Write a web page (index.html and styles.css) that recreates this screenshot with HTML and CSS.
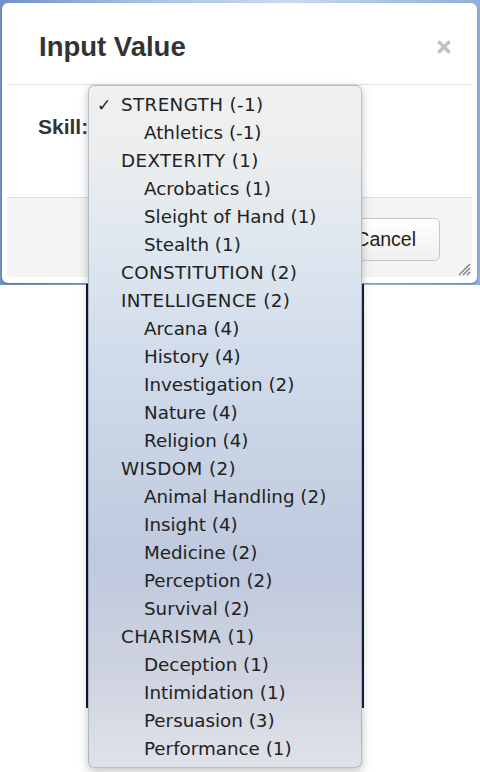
FILE: index.html
```html
<!DOCTYPE html>
<html>
<head>
<meta charset="utf-8">
<link rel="stylesheet" href="styles.css">
</head>
<body>
<div class="screen">
  <div class="dialog">
    <div class="dlg-header">
      <h1 class="dlg-title">Input Value</h1>
      <span class="dlg-close">
        <svg width="14" height="14" viewBox="0 0 14 14"><path d="M2.5 2.5 L11.5 11.5 M11.5 2.5 L2.5 11.5" stroke="#c2c2c2" stroke-width="3.6" stroke-linecap="round" fill="none"/></svg>
      </span>
    </div>
    <div class="dlg-body">
      <label class="skill-label">Skill:</label>
    </div>
    <div class="dlg-footer">
      <button class="btn">Cancel</button>
      <span class="grip">
        <svg width="14" height="14" viewBox="0 0 14 14"><path d="M13 2 L2 13 M13 6 L6 13 M13 10 L10 13" stroke="#777" stroke-width="1.2" fill="none"/></svg>
      </span>
    </div>
  </div>
</div>
<div class="backdrop"></div>
<ul class="menu">
  <li class="group checked"><span class="check">&#x2713;</span>STRENGTH (-1)</li>
  <li class="item">Athletics (-1)</li>
  <li class="group">DEXTERITY (1)</li>
  <li class="item">Acrobatics (1)</li>
  <li class="item">Sleight of Hand (1)</li>
  <li class="item">Stealth (1)</li>
  <li class="group">CONSTITUTION (2)</li>
  <li class="group">INTELLIGENCE (2)</li>
  <li class="item">Arcana (4)</li>
  <li class="item">History (4)</li>
  <li class="item">Investigation (2)</li>
  <li class="item">Nature (4)</li>
  <li class="item">Religion (4)</li>
  <li class="group">WISDOM (2)</li>
  <li class="item">Animal Handling (2)</li>
  <li class="item">Insight (4)</li>
  <li class="item">Medicine (2)</li>
  <li class="item">Perception (2)</li>
  <li class="item">Survival (2)</li>
  <li class="group">CHARISMA (1)</li>
  <li class="item">Deception (1)</li>
  <li class="item">Intimidation (1)</li>
  <li class="item">Persuasion (3)</li>
  <li class="item">Performance (1)</li>
</ul>
</body>
</html>
```
FILE: styles.css
```css
html, body {
  margin: 0;
  padding: 0;
  background: #ffffff;
  font-family: "Liberation Sans", Arial, sans-serif;
}
.screen {
  height: 285px;
  box-sizing: border-box;
  padding: 3px 3px 2px 2px;
  background: linear-gradient(90deg, #6f93c8 0%, #a8c2e6 30%, #c9daf0 60%, #8fb0dc 100%);
}
.dialog {
  height: 280px;
  background: #ffffff;
  border-radius: 6px;
  box-sizing: border-box;
  padding: 0 5px 6px 5px;
  display: flex;
  flex-direction: column;
  box-shadow: 0 1px 2px rgba(0,0,0,0.3);
}
.dlg-header {
  height: 81px;
  display: flex;
  align-items: center;
  justify-content: space-between;
  padding: 0 21px 0 32px;
  border-bottom: 1px solid #e2e2e2;
}
.dlg-title {
  margin: 0;
  font-size: 27.5px;
  font-weight: bold;
  color: #333333;
  padding-top: 6px;
}
.dlg-close {
  display: flex;
  padding-top: 6px;
}
.dlg-body {
  height: 112px;
  padding: 0 0 0 31px;
  display: flex;
  align-items: flex-start;
}
.skill-label {
  margin-top: 30px;
  font-size: 21px;
  font-weight: bold;
  color: #333333;
}
.dlg-footer {
  flex: 1;
  background: #f4f4f4;
  border-top: 1px solid #dddddd;
  border-radius: 0 0 5px 5px;
  display: flex;
  align-items: flex-start;
  justify-content: flex-end;
  position: relative;
  padding: 20px 32px 0 0;
}
.btn {
  height: 43px;
  width: 100px;
  font-family: "Liberation Sans", Arial, sans-serif;
  font-size: 19.5px;
  color: #222;
  background: linear-gradient(#ffffff, #f0f0f0);
  border: 1px solid #c8c8c8;
  border-radius: 5px;
  padding: 0 23px 0 0;
  text-align: right;
}
.grip {
  position: absolute;
  right: 1px;
  bottom: 1px;
  width: 14px;
  height: 14px;
}
.backdrop {
  position: absolute;
  left: 86px;
  top: 284px;
  width: 278px;
  height: 424px;
  background: linear-gradient(90deg, #0e1632, #3a5690 10%, #4a68a8 50%, #2c4680 90%, #142040);
}
.menu {
  position: absolute;
  left: 88px;
  top: 85px;
  width: 274px;
  height: 683px;
  box-sizing: border-box;
  margin: 0;
  padding: 5px 0 6px 0;
  list-style: none;
  border-radius: 6px;
  border: 1px solid rgba(120,130,150,0.45);
  background: linear-gradient(180deg, #f0f0f0 0%, #eceeef 10%, #dde6ef 25%, #cdd8e9 45%, #bfc9de 70%, #cdd2df 85%, #dfe2e9 100%);
  box-shadow: 0 3px 10px rgba(0,0,0,0.25);
  font-family: "DejaVu Sans", Verdana, sans-serif;
  font-size: 18.3px;
  color: #222222;
}
.menu li {
  height: 28px;
  line-height: 28px;
  white-space: nowrap;
  position: relative;
}
.group {
  padding-left: 32px;
  letter-spacing: 0.4px;
}
.item {
  padding-left: 55px;
}
.check {
  position: absolute;
  left: 8px;
  top: 0;
  font-size: 17px;
  font-weight: bold;
  letter-spacing: 0;
}
```
